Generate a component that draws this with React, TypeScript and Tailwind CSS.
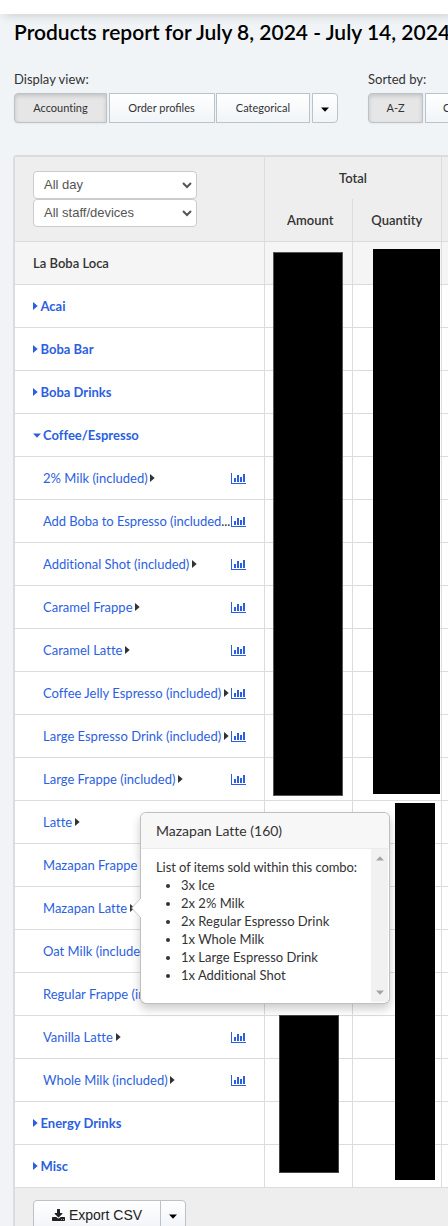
import React from "react";

type Row = { label: string; kind: "store" | "closed" | "open" | "item" | "cut"; chart?: boolean };

const rows: Row[] = [
  { label: "La Boba Loca", kind: "store" },
  { label: "Acai", kind: "closed" },
  { label: "Boba Bar", kind: "closed" },
  { label: "Boba Drinks", kind: "closed" },
  { label: "Coffee/Espresso", kind: "open" },
  { label: "2% Milk (included)", kind: "item", chart: true },
  { label: "Add Boba to Espresso (included", kind: "cut", chart: true },
  { label: "Additional Shot (included)", kind: "item", chart: true },
  { label: "Caramel Frappe", kind: "item", chart: true },
  { label: "Caramel Latte", kind: "item", chart: true },
  { label: "Coffee Jelly Espresso (included)", kind: "item", chart: true },
  { label: "Large Espresso Drink (included)", kind: "item", chart: true },
  { label: "Large Frappe (included)", kind: "item", chart: true },
  { label: "Latte", kind: "item", chart: true },
  { label: "Mazapan Frappe", kind: "item", chart: true },
  { label: "Mazapan Latte", kind: "item", chart: true },
  { label: "Oat Milk (included)", kind: "item", chart: true },
  { label: "Regular Frappe (included)", kind: "item", chart: true },
  { label: "Vanilla Latte", kind: "item", chart: true },
  { label: "Whole Milk (included)", kind: "item", chart: true },
  { label: "Energy Drinks", kind: "closed" },
  { label: "Misc", kind: "closed" },
];

const comboItems = ["3x Ice", "2x 2% Milk", "2x Regular Espresso Drink", "1x Whole Milk", "1x Large Espresso Drink", "1x Additional Shot"];

function CaretRight({ className = "" }: { className?: string }) {
  return (
    <svg width="5" height="8" viewBox="0 0 5 8" className={`shrink-0 ${className}`} fill="currentColor">
      <path d="M0 0 L4.7 4 L0 8 Z" />
    </svg>
  );
}

function CaretDown({ className = "" }: { className?: string }) {
  return (
    <svg width="8" height="5" viewBox="0 0 8 5" className={`shrink-0 ${className}`} fill="currentColor">
      <path d="M0 0.5 H8 L4 4.7 Z" />
    </svg>
  );
}

function DownloadIcon() {
  return (
    <svg width="13" height="12" viewBox="0 0 1664 1536" className="shrink-0" fill="currentColor">
      <path d="M1280 1344q0-26-19-45t-45-19-45 19-19 45 19 45 45 19 45-19 19-45zm256 0q0-26-19-45t-45-19-45 19-19 45 19 45 45 19 45-19 19-45zm128-224v320q0 40-28 68t-68 28h-1472q-40 0-68-28t-28-68v-320q0-40 28-68t68-28h465l135 136q58 56 136 56t136-56l136-136h464q40 0 68 28t28 68zm-325-569q17 41-14 70l-448 448q-18 19-45 19t-45-19l-448-448q-31-29-14-70 17-39 59-39h256v-448q0-26 19-45t45-19h256q26 0 45 19t19 45v448h256q42 0 59 39z" />
    </svg>
  );
}

function ChartIcon() {
  return (
    <svg width="15" height="12" viewBox="0 0 15 12" className="shrink-0 text-[#2c5fe0]" fill="currentColor">
      <path d="M0 0 H1 V10 H15 V11 H0 Z" />
      <path d="M3 5 H5 V9 H3 Z M6 2 H8 V9 H6 Z M9 4 H11 V9 H9 Z M12 1 H14 V9 H12 Z" />
    </svg>
  );
}

function Select({ value }: { value: string }) {
  return (
    <div className="flex h-7 w-[164px] items-center justify-between rounded-[4px] border border-[#ccc] bg-white pr-1 pl-[10px] font-['Liberation_Sans',sans-serif] text-[13px] text-[#555]">
      <span>{value}</span>
      <svg width="10" height="7" viewBox="0 0 10 7" fill="none" stroke="currentColor" strokeWidth="2">
        <path d="M1 1 L5 5 L9 1" />
      </svg>
    </div>
  );
}

const button = "flex h-[30px] items-center justify-center border border-[#bcc2c9] text-[11px] text-[#333]";
const plain = "bg-linear-to-b from-white to-[#f1f4f8]";
const pressed = "bg-[#e6e6e6] shadow-[inset_0_2px_4px_rgba(0,0,0,0.15),0_1px_2px_rgba(0,0,0,0.05)]";

function ReportRow({ row }: { row: Row }) {
  return (
    <div className={`flex h-[43px] border-b border-[#dcdcdc] ${row.kind === "store" ? "bg-[#f5f5f5]" : "bg-white"}`}>
      <div className="flex w-[250px] shrink-0 items-center border-r border-[#dcdcdc] pr-[18px] pl-[18px]">
        {row.kind === "store" && <span className="font-semibold">{row.label}</span>}
        {(row.kind === "closed" || row.kind === "open") && (
          <span className="flex items-center font-bold text-[#2c5fe0]">
            {row.kind === "open" ? <CaretDown className="mr-[2px]" /> : <CaretRight className="mr-[2.5px]" />}
            {row.label}
          </span>
        )}
        {(row.kind === "item" || row.kind === "cut") && (
          <div className="flex w-[198px] shrink-0 items-center pl-[10px]">
            <span className={`whitespace-nowrap text-[#2c5fe0] ${row.kind === "cut" ? "tracking-[-0.06px]" : ""}`}>{row.label}</span>
            {row.kind === "cut" ? <span>...</span> : <CaretRight className="ml-[2.7px]" />}
          </div>
        )}
        {row.chart && <span className="pt-px"><ChartIcon /></span>}
      </div>
      <div className="w-[88px] shrink-0 border-r border-[#dcdcdc]" />
      <div className="w-[89px] shrink-0 border-r border-[#dcdcdc]" />
    </div>
  );
}

function ComboPopover() {
  return (
    <div className="absolute top-[812px] left-[140px] h-[192px] w-[250px] rounded-[6px] border border-black/25 bg-white shadow-[0_5px_10px_rgba(0,0,0,0.2)]">
      <svg width="10" height="20" viewBox="0 0 10 20" className="absolute top-[85px] -left-[10px]">
        <path d="M10 0 L0.7 10 L10 20 Z" fill="#fff" />
        <path d="M10 0 L0.7 10 L10 20" fill="none" stroke="#c8c8c8" />
      </svg>
      <div className="h-9 rounded-t-[5px] border-b border-[#ebebeb] bg-[#f7f7f7] pt-[9px] pl-[15px] text-[14px] leading-[18px]">Mazapan Latte (160)</div>
      <div className="mr-px flex h-[153px]">
        <div className="grow pt-[9px] pl-[15px] leading-[18px]">
          <p className="tracking-[-0.08px] whitespace-nowrap">List of items sold within this combo:</p>
          <ul className="list-disc pl-[25px]">
            {comboItems.map((item) => <li key={item}>{item}</li>)}
          </ul>
        </div>
        <div className="flex w-[17px] shrink-0 flex-col items-center justify-between bg-[#f1f1f1] py-[7px] text-[#a3a3a3]">
          <CaretDown className="rotate-180" />
          <CaretDown />
        </div>
      </div>
    </div>
  );
}

export default function App() {
  return (
    <div className="relative h-[1226px] w-[448px] overflow-hidden bg-[#f0f4f7] font-['Lato',sans-serif] text-[13px] leading-[18px] text-[#333] [font-variant-ligatures:none]">
      <div className="h-[14px] bg-white shadow-[4px_0_12px_rgba(0,0,0,0.2)]" />
      <h1 className="mt-[4px] ml-[14px] text-[21px] leading-[28px] font-semibold whitespace-nowrap text-black">Products report for July 8, 2024 - July 14, 2024</h1>
      <div className="mt-[24px] ml-[14px] flex h-[53px] w-[560px] gap-[30px]">
        <div className="w-[324px] shrink-0">
          <div className="mb-[5px]">Display view:</div>
          <div className="flex">
            <div className={`${button} ${pressed} w-[93px] rounded-l-[4px]`}>Accounting</div>
            <div className={`${button} ${plain} ml-[2px] w-[106px] pr-px [font-variant-ligatures:normal]`}>Order profiles</div>
            <div className={`${button} ${plain} ml-px w-[94px]`}>Categorical</div>
            <div className={`${button} ${plain} ml-[2px] w-[26px] rounded-r-[4px] pt-[2px] text-black`}><CaretDown /></div>
          </div>
        </div>
        <div>
          <div className="mb-[5px]">Sorted by:</div>
          <div className="flex">
            <div className={`${button} ${pressed} w-[55px] rounded-l-[4px]`}>A-Z</div>
            <div className={`${button} ${plain} ml-[2px] w-[95px]`}><span className="w-[59px]">Category</span></div>
          </div>
        </div>
      </div>
      <div className="mt-[32px] ml-[13px] w-[470px] rounded-tl-[4px] border-t-2 border-l-2 border-[#dadcde] bg-white">
        <div className="flex h-[85px] border-b border-[#dcdcdc] bg-[#eee] font-semibold">
          <div className="w-[250px] shrink-0 border-r border-[#dcdcdc] pt-[14px] pl-[18px] font-normal">
            <Select value="All day" />
            <Select value="All staff/devices" />
          </div>
          <div className="w-[177px] shrink-0 border-r border-[#dcdcdc]">
            <div className="h-[42px] pt-[12px] text-center">Total</div>
            <div className="flex h-[42px]">
              <div className="w-[88px] border-r border-[#dcdcdc] pt-[12px] pl-[4px] text-center">Amount</div>
              <div className="w-[89px] pt-[12px] text-center">Quantity</div>
            </div>
          </div>
        </div>
        {rows.map((row) => <ReportRow key={row.label} row={row} />)}
        <div className="h-[60px] bg-[#eee] pt-[12px] pl-[18px]">
          <div className="flex font-['Liberation_Sans',sans-serif] text-[14px] text-[#222]">
            <div className={`flex h-[30px] w-[128px] items-center justify-center gap-1 rounded-l-[4px] border border-[#bcc2c9] ${plain}`}>
              <DownloadIcon />
              <span>Export CSV</span>
            </div>
            <div className={`-ml-px flex h-[30px] w-[26px] items-center justify-center rounded-r-[4px] border border-[#bcc2c9] pt-[2px] text-black ${plain}`}><CaretDown /></div>
          </div>
        </div>
      </div>
      <div className="absolute top-[252px] left-[273px] h-[544px] w-[70px] border border-[#555] bg-black" />
      <div className="absolute top-[249px] left-[373px] h-[545px] w-[67px] bg-black" />
      <div className="absolute top-[803px] left-[395px] h-[377px] w-[40px] bg-black" />
      <div className="absolute top-[1015px] left-[279px] h-[158px] w-[60px] border border-[#444] bg-black" />
      <ComboPopover />
    </div>
  );
}
